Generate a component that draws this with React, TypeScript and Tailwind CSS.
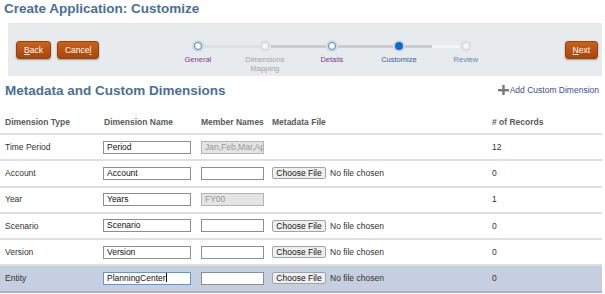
import React from "react";

type StepState = "visited" | "skipped" | "current" | "todo";

interface Step {
  label: React.ReactNode;
  state: StepState;
  labelClass: string;
  left: string;
  right: string;
}

const steps: Step[] = [
  { label: "General", state: "visited", labelClass: "text-[#7b3a93]", left: "bg-transparent", right: "bg-[#dddfe1]" },
  {
    label: (
      <>
        Dimensions
        <br />
        Mapping
      </>
    ),
    state: "skipped",
    labelClass: "text-[#a3a3a3]",
    left: "bg-[#dddfe1]",
    right: "bg-[#c9cbcd]",
  },
  { label: "Details", state: "visited", labelClass: "text-[#7b3a93]", left: "bg-[#c9cbcd]", right: "bg-[#c9cbcd]" },
  { label: "Customize", state: "current", labelClass: "text-[#30608f]", left: "bg-[#c9cbcd]", right: "bg-[#c9cbcd]" },
  { label: "Review", state: "todo", labelClass: "text-[#5f85aa]", left: "bg-[#f4f5f6]", right: "bg-transparent" },
];

interface Row {
  type: string;
  name: string;
  member: string;
  memberDisabled?: boolean;
  file: boolean;
  records: string;
  selected?: boolean;
}

const rows: Row[] = [
  { type: "Time Period", name: "Period", member: "Jan,Feb,Mar,Apr,May,Jun", memberDisabled: true, file: false, records: "12" },
  { type: "Account", name: "Account", member: "", file: true, records: "0" },
  { type: "Year", name: "Years", member: "FY00", memberDisabled: true, file: false, records: "1" },
  { type: "Scenario", name: "Scenario", member: "", file: true, records: "0" },
  { type: "Version", name: "Version", member: "", file: true, records: "0" },
  { type: "Entity", name: "PlanningCenter", member: "", file: true, records: "0", selected: true },
];

function StopCircle({ state }: { state: StepState }) {
  if (state === "current") {
    return (
      <div className="flex h-[12px] w-[12px] shrink-0 items-center justify-center rounded-full bg-[#d3d7db]">
        <div className="h-[8px] w-[8px] rounded-full bg-[#0b6bd3]" />
      </div>
    );
  }
  if (state === "visited") {
    return (
      <div className="flex h-[12px] w-[12px] shrink-0 items-center justify-center rounded-full bg-[#d3d7db]">
        <div className="h-[8px] w-[8px] rounded-full border border-[#3a86d6] bg-white" />
      </div>
    );
  }
  return (
    <div className="flex h-[12px] w-[12px] shrink-0 items-center justify-center rounded-full bg-[#e0e3e6]">
      <div className="h-[8px] w-[8px] rounded-full border border-[#d0d2d4] bg-[#f7f7f7]" />
    </div>
  );
}

function OrangeButton({ children }: { children: React.ReactNode }) {
  return (
    <button className="flex h-[18px] items-center justify-center rounded-[3px] border border-[#98400a] bg-linear-to-b from-[#c9621a] to-[#a9450a] px-[7px] text-[8.5px] leading-none text-white shadow-[0_1px_2px_rgba(0,0,0,0.35)]">
      {children}
    </button>
  );
}

function Field({
  value,
  width,
  disabled,
  focused,
}: {
  value: string;
  width: string;
  disabled?: boolean;
  focused?: boolean;
}) {
  return (
    <div
      className={`h-[13px] overflow-hidden whitespace-nowrap border px-[3px] leading-[11px] ${width} ${
        disabled
          ? "border-[#b4b4b4] bg-[#e4e4e4] text-[#979797]"
          : focused
            ? "border-[#5b97db] bg-white text-[#111]"
            : "border-[#8e8e8e] bg-white text-[#111]"
      }`}
    >
      {value}
      {focused && <span className="ml-[0.5px] inline-block h-[9px] w-px bg-black align-[-1px]" />}
    </div>
  );
}

export default function App() {
  return (
    <div className="h-[294px] w-[605px] overflow-hidden bg-white font-['Liberation_Sans',Arial,sans-serif] text-[8.5px] text-[#333]">
      {/* Page title */}
      <div className="h-[23px] pl-[4px] pt-[1px]">
        <h1 className="text-[13.5px] font-bold leading-[16px] text-[#4a6f96]">Create Application: Customize</h1>
      </div>

      {/* Train bar */}
      <div className="ml-[8px] flex h-[53px] w-[594px] items-start bg-[#e8ebed] pl-[8px] pr-[4px]">
        <div className="mt-[18px] flex gap-[6px]">
          <OrangeButton>
            <span className="underline">B</span>ack
          </OrangeButton>
          <OrangeButton>
            Cance<span className="underline">l</span>
          </OrangeButton>
        </div>

        <div className="ml-[65px] mt-[17px] flex">
          {steps.map((s, i) => (
            <div key={i} className="flex w-[67px] flex-col items-center">
              <div className="flex w-full items-center">
                <div className={`h-[3px] flex-1 ${s.left}`} />
                <StopCircle state={s.state} />
                <div className={`h-[3px] flex-1 ${s.right}`} />
              </div>
              <div className={`mt-[3px] text-center text-[7.5px] leading-[9px] ${s.labelClass}`}>{s.label}</div>
            </div>
          ))}
        </div>

        <div className="ml-auto mt-[18px]">
          <OrangeButton>
            <span className="underline">N</span>ext
          </OrangeButton>
        </div>
      </div>

      {/* Section heading */}
      <div className="flex h-[36px] items-start justify-between pl-[5px] pr-[6px] pt-[7px]">
        <h2 className="text-[13.5px] font-bold leading-[16px] text-[#4a6f96]">Metadata and Custom Dimensions</h2>
        <a className="mt-[2px] flex items-center gap-[1px] leading-[10px] text-[#3c4a9a]">
          <svg width="11" height="10" viewBox="0 0 11 10">
            <rect x="0" y="4" width="11" height="2.4" fill="#7a7a7a" />
            <rect x="4.3" y="0" width="2.4" height="10" fill="#7a7a7a" />
          </svg>
          Add Custom Dimension
        </a>
      </div>

      {/* Table */}
      <div className="mr-[3px]">
        <div className="flex h-[23px] items-center border-b-2 border-[#e0e0e0] pl-[5px] font-bold text-[#5a5a5a]">
          <div className="w-[98px]">Dimension Type</div>
          <div className="w-[98px] pl-[1px]">Dimension Name</div>
          <div className="w-[71px]">Member Names</div>
          <div className="w-[220px]">Metadata File</div>
          <div className="flex-1">
            # of Records
          </div>
        </div>

        {rows.map((r) => (
          <div
            key={r.type}
            className={`flex h-[26.25px] items-center border-b-2 pl-[5px] ${
              r.selected ? "border-[#aab4c8] bg-[#c6cfe0]" : "border-[#e0e0e0] bg-white"
            }`}
          >
            <div className="w-[98px]">{r.type}</div>
            <div className="w-[98px]">
              <Field value={r.name} width="w-[88px]" focused={r.selected} />
            </div>
            <div className="w-[71px]">
              <Field value={r.member} width="w-[63px]" disabled={r.memberDisabled} />
            </div>
            <div className="flex w-[220px] items-center gap-[4px]">
              {r.file && (
                <>
                  <button className="flex h-[12px] w-[54px] items-center justify-center rounded-[2px] border border-[#a3a3a3] bg-[#efefef] leading-none text-[#111]">
                    Choose File
                  </button>
                  <span>No file chosen</span>
                </>
              )}
            </div>
            <div className="flex-1">{r.records}</div>
          </div>
        ))}
      </div>
    </div>
  );
}
